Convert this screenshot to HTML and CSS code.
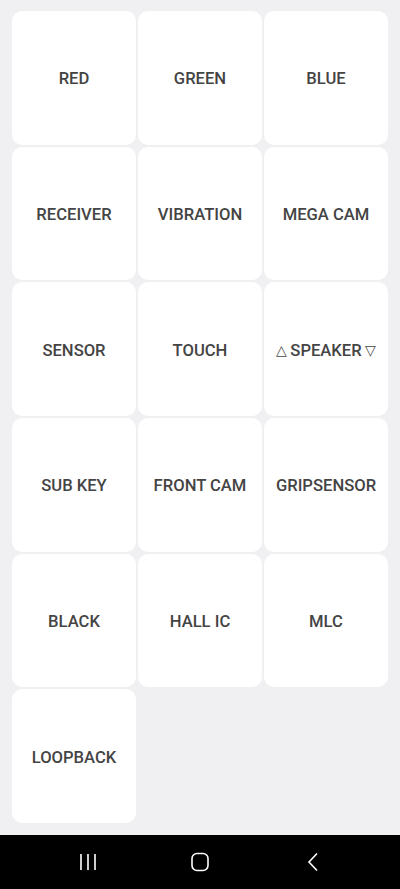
FILE: index.html
```html
<html>
<head>
<meta name="viewport" content="width=400">
<link rel="stylesheet" href="styles.css">
</head>
<body>
<div class="page">
    <div class="grid">
        <div class="tile">RED</div>
        <div class="tile">GREEN</div>
        <div class="tile">BLUE</div>
        <div class="tile">RECEIVER</div>
        <div class="tile">VIBRATION</div>
        <div class="tile">MEGA CAM</div>
        <div class="tile">SENSOR</div>
        <div class="tile">TOUCH</div>
        <div class="tile"><span class="tri">&#9651;</span>SPEAKER<span class="tri">&#9661;</span></div>
        <div class="tile">SUB KEY</div>
        <div class="tile">FRONT CAM</div>
        <div class="tile">GRIPSENSOR</div>
        <div class="tile">BLACK</div>
        <div class="tile">HALL IC</div>
        <div class="tile">MLC</div>
        <div class="tile">LOOPBACK</div>
    </div>
</div>
<div class="navbar">
    <svg class="nav-icon" width="20" height="20" viewBox="0 0 20 20">
        <path d="M3 2v16M10 2v16M17 2v16" stroke="#fff" stroke-width="1.6" fill="none"/>
    </svg>
    <svg class="nav-icon" width="20" height="20" viewBox="0 0 20 20">
        <rect x="2" y="1.5" width="16" height="17" rx="5" stroke="#fff" stroke-width="1.6" fill="none"/>
    </svg>
    <svg class="nav-icon" width="20" height="20" viewBox="0 0 20 20">
        <path d="M15 1.5L7 10l8 8.5" stroke="#fff" stroke-width="1.6" fill="none"/>
    </svg>
</div>
</body>
</html>
```

FILE: styles.css
```css
html, body {
    margin: 0;
    padding: 0;
    background: #f0f0f2;
    font-family: Roboto, "Liberation Sans", sans-serif;
}
.page {
    height: 835px;
    padding: 11px 12px 0 12px;
    box-sizing: border-box;
}
.grid {
    display: grid;
    grid-template-columns: repeat(3, 124px);
    grid-auto-rows: 133.7px;
    gap: 2px;
}
.tile {
    background: #ffffff;
    border-radius: 10px;
    display: flex;
    align-items: center;
    justify-content: center;
    color: #444444;
    font-size: 16.6px;
    font-weight: 500;
    padding-top: 2px;
    box-sizing: border-box;
}
.tri {
    font-size: 14px;
    margin: 0 3px;
}
.navbar {
    height: 54px;
    background: #000000;
    display: flex;
    align-items: center;
    gap: 92px;
    padding-left: 78px;
}
```
